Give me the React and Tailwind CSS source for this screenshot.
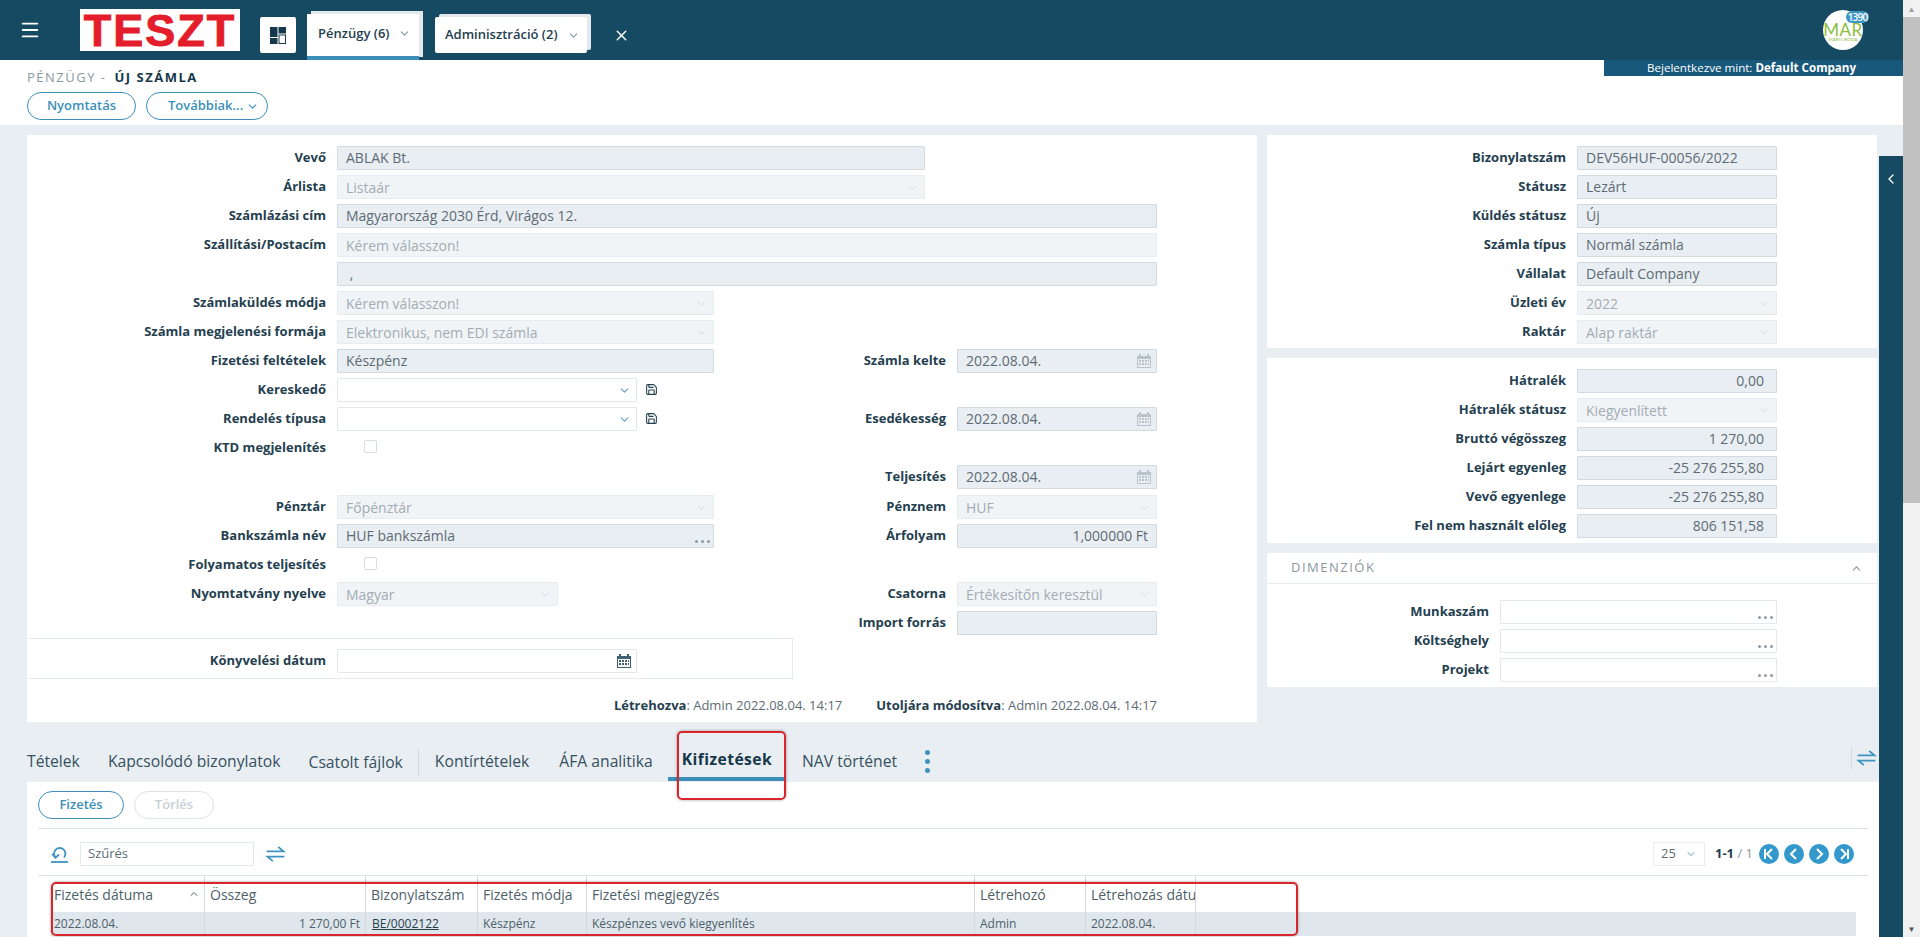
import React from "react";
import { ChevronDown, ChevronUp, ChevronLeft, Menu, X, Save } from "lucide-react";

const inputBase = "h-6 flex items-center px-2 text-[14px] rounded-[1px] whitespace-nowrap";
const readonlyCls = "bg-[#e9eef2] border border-[#d2dae0] text-[#5d6b75]";
const disabledCls = "bg-[#f0f4f7] border border-[#e6ebef] text-[#a3acb3] pt-[1px]";
const emptyCls = "bg-white border border-[#e3e8ec] text-[#5d6b75]";

const Swap = ({ className }) => (
  <svg viewBox="0 0 22 18" className={className} fill="none" stroke="#3f93c1" strokeWidth="2">
    <path d="M1 6h19L14 1" />
    <path d="M21 12H2l6 5" />
  </svg>
);

const Dots = () => (
  <span className="absolute right-[3px] bottom-[4px] flex gap-[3px]">
    <i className="w-[3px] h-[3px] rounded-full bg-[#8b9ba8]" />
    <i className="w-[3px] h-[3px] rounded-full bg-[#8b9ba8]" />
    <i className="w-[3px] h-[3px] rounded-full bg-[#8b9ba8]" />
  </span>
);

const Cal = ({ dark }) => (
  <svg viewBox="0 0 14 14" className="absolute right-[5px] top-[4px] w-[14px] h-[14px]" fill={dark ? "#3f6274" : "#b9c3ca"}>
    <rect x="2" y="0" width="2" height="2" />
    <rect x="10" y="0" width="2" height="2" />
    <path fillRule="evenodd" d="M0 2h14v12H0zM1 5v8h12V5z" />
    <path d="M2 6h2v2H2zM5 6h2v2H5zM8 6h2v2H8zM11 6h1v2h-1zM2 9h2v2H2zM5 9h2v2H5zM8 9h2v2H8zM11 9h1v2h-1z" />
  </svg>
);

const Control = ({ w, value = "", kind = "readonly", right, rightPad = "pr-[8px]", select, dots, date, darkIcon }) => {
  const tone = kind === "readonly" ? readonlyCls : kind === "disabled" ? disabledCls : emptyCls;
  return (
    <div className={`${inputBase} ${tone} relative shrink-0 ${right ? `justify-end ${rightPad}` : ""} ${w}`}>
      {value}
      {select && <ChevronDown size={13} className={`absolute right-[5px] top-[5px] ${darkIcon ? "text-[#5f9fc2]" : "text-[#dde3e8]"}`} />}
      {dots && <Dots />}
      {date && <Cal dark={darkIcon} />}
    </div>
  );
};

const Label = ({ w, children }) => (
  <div className={`${w} shrink-0 text-right pr-[11px] text-[13px] font-bold text-[#24404f] whitespace-nowrap`}>{children}</div>
);

// mezosor: cimke + vezerlo
const Field = ({ label, labelW = "w-[310px]", children }) => (
  <div className="flex items-center h-[29px]">
    <Label w={labelW}>{label}</Label>
    {children}
  </div>
);

const Check = () => <div className="ml-[27px] mb-[2px] w-[13px] h-[13px] border border-[#d7dde2] rounded-[2px] bg-white" />;

const LeftCard = () => (
  <div className="w-[1230px] h-[587px] bg-white pt-[8px] shrink-0">
    <Field label="Vevő"><Control w="w-[588px]" value="ABLAK Bt." /></Field>
    <Field label="Árlista"><Control w="w-[588px]" value="Listaár" kind="disabled" select /></Field>
    <Field label="Számlázási cím"><Control w="w-[820px]" value="Magyarország 2030 Érd, Virágos 12." /></Field>
    <Field label="Szállítási/Postacím"><Control w="w-[820px]" value="Kérem válasszon!" kind="disabled" /></Field>
    <Field label=""><Control w="w-[820px]" value="&nbsp;," /></Field>
    <Field label="Számlaküldés módja"><Control w="w-[377px]" value="Kérem válasszon!" kind="disabled" select /></Field>
    <Field label="Számla megjelenési formája"><Control w="w-[377px]" value="Elektronikus, nem EDI számla" kind="disabled" select /></Field>

    <div className="grid grid-cols-[730px_400px] grid-rows-[repeat(10,29px)]">
      <Field label="Fizetési feltételek"><Control w="w-[377px]" value="Készpénz" /></Field>
      <Field label="Számla kelte" labelW="w-[200px]"><Control w="w-[200px]" value="2022.08.04." date /></Field>

      <Field label="Kereskedő">
        <Control w="w-[300px]" kind="empty" select darkIcon />
        <Save size={13} className="ml-[8px] text-[#24404f]" />
      </Field>
      <div />

      <Field label="Rendelés típusa">
        <Control w="w-[300px]" kind="empty" select darkIcon />
        <Save size={13} className="ml-[8px] text-[#24404f]" />
      </Field>
      <Field label="Esedékesség" labelW="w-[200px]"><Control w="w-[200px]" value="2022.08.04." date /></Field>

      <Field label="KTD megjelenítés"><Check /></Field>
      <div />

      <div />
      <Field label="Teljesítés" labelW="w-[200px]"><Control w="w-[200px]" value="2022.08.04." date /></Field>

      <div className="mt-[1px]"><Field label="Pénztár"><Control w="w-[377px]" value="Főpénztár" kind="disabled" select /></Field></div>
      <div className="mt-[1px]"><Field label="Pénznem" labelW="w-[200px]"><Control w="w-[200px]" value="HUF" kind="disabled" select /></Field></div>

      <div className="mt-[1px]"><Field label="Bankszámla név"><Control w="w-[377px]" value="HUF bankszámla" dots /></Field></div>
      <div className="mt-[1px]"><Field label="Árfolyam" labelW="w-[200px]"><Control w="w-[200px]" value="1,000000 Ft" right /></Field></div>

      <div className="mt-[1px]"><Field label="Folyamatos teljesítés"><Check /></Field></div>
      <div />

      <div className="mt-[1px]"><Field label="Nyomtatvány nyelve"><Control w="w-[221px]" value="Magyar" kind="disabled" select /></Field></div>
      <div className="mt-[1px]"><Field label="Csatorna" labelW="w-[200px]"><Control w="w-[200px]" value="Értékesítőn keresztül" kind="disabled" select /></Field></div>

      <div />
      <div className="mt-[1px]"><Field label="Import forrás" labelW="w-[200px]"><Control w="w-[200px]" /></Field></div>
    </div>

    <div className="w-[766px] h-[41px] mt-[2px] pt-[4px] border-y border-r border-[#e6ebef] flex items-center">
      <Field label="Könyvelési dátum">
        <Control w="w-[300px]" kind="empty" date darkIcon />
      </Field>
    </div>
    <div className="w-[1130px] mt-[17px] text-right text-[13px] text-[#5d6b75]">
      <span className="font-bold text-[#24404f]">Létrehozva</span>: Admin 2022.08.04. 14:17
      <span className="ml-[34px] font-bold text-[#24404f]">Utoljára módosítva</span>: Admin 2022.08.04. 14:17
    </div>
  </div>
);

const RightCards = () => (
  <div className="w-[610px] shrink-0 flex flex-col gap-[10px]">
    <div className="bg-white h-[213px] pt-[8px]">
      <Field label="Bizonylatszám"><Control w="w-[200px]" value="DEV56HUF-00056/2022" /></Field>
      <Field label="Státusz"><Control w="w-[200px]" value="Lezárt" /></Field>
      <Field label="Küldés státusz"><Control w="w-[200px]" value="Új" /></Field>
      <Field label="Számla típus"><Control w="w-[200px]" value="Normál számla" /></Field>
      <Field label="Vállalat"><Control w="w-[200px]" value="Default Company" /></Field>
      <Field label="Üzleti év"><Control w="w-[200px]" value="2022" kind="disabled" select /></Field>
      <Field label="Raktár"><Control w="w-[200px]" value="Alap raktár" kind="disabled" select /></Field>
    </div>
    <div className="bg-white h-[185px] pt-[8px]">
      <Field label="Hátralék"><Control w="w-[200px]" value="0,00" right rightPad="pr-[12px]" /></Field>
      <Field label="Hátralék státusz"><Control w="w-[200px]" value="Kiegyenlített" kind="disabled" select /></Field>
      <Field label="Bruttó végösszeg"><Control w="w-[200px]" value="1 270,00" right rightPad="pr-[12px]" /></Field>
      <Field label="Lejárt egyenleg"><Control w="w-[200px]" value="-25 276 255,80" right rightPad="pr-[12px]" /></Field>
      <Field label="Vevő egyenlege"><Control w="w-[200px]" value="-25 276 255,80" right rightPad="pr-[12px]" /></Field>
      <Field label="Fel nem használt előleg"><Control w="w-[200px]" value="806 151,58" right rightPad="pr-[12px]" /></Field>
    </div>
    <div className="bg-white h-[134px]">
      <div className="h-[31px] border-b border-[#e6ebef] flex items-center justify-between pl-[24px] pr-[14px]">
        <span className="text-[13px] tracking-[1.5px] text-[#8a979f]">DIMENZIÓK</span>
        <ChevronUp size={13} className="text-[#8a979f]" />
      </div>
      <div className="pt-[13px]">
        <Field label="Munkaszám" labelW="w-[233px]"><Control w="w-[277px]" kind="empty" dots /></Field>
        <Field label="Költséghely" labelW="w-[233px]"><Control w="w-[277px]" kind="empty" dots /></Field>
        <Field label="Projekt" labelW="w-[233px]"><Control w="w-[277px]" kind="empty" dots /></Field>
      </div>
    </div>
  </div>
);

const TabBar = () => (
  <div className="h-[45px] mt-[15px] flex items-start text-[15.7px] text-[#35505f] pr-[2px] whitespace-nowrap">
    <div className="flex items-center h-[45px] pt-[5px] gap-[28px]">
      <span>Tételek</span>
      <span>Kapcsolódó bizonylatok</span>
      <span className="border-r border-[#d2dae0] pr-[15px] -mr-[12px] leading-[27px]">Csatolt fájlok</span>
      <span>Kontírtételek</span>
      <span className="ml-[2px]">ÁFA analitika</span>
    </div>
    <div className="h-[44px] ml-[15px] px-[14px] flex items-center pt-[6px] border-b-4 border-[#3c8fb9] font-bold text-[#17384a] tracking-[0.4px]">Kifizetések</div>
    <div className="flex items-center h-[45px] pt-[5px] ml-[16px]">NAV történet</div>
    <div className="flex flex-col gap-[4px] ml-[28px] mt-[13px]">
      <i className="w-[5px] h-[5px] rounded-full bg-[#3f93c1]" />
      <i className="w-[5px] h-[5px] rounded-full bg-[#3f93c1]" />
      <i className="w-[5px] h-[5px] rounded-full bg-[#3f93c1]" />
    </div>
    <div className="ml-auto mt-[10px] h-[22px] border-l border-[#d2dae0] pl-[4px] flex items-center">
      <Swap className="w-[21px] h-[16px]" />
    </div>
  </div>
);

const cols = [
  ["w-[154px]", "Fizetés dátuma"],
  ["w-[161px]", "Összeg"],
  ["w-[112px]", "Bizonylatszám"],
  ["w-[109px]", "Fizetés módja"],
  ["w-[388px]", "Fizetési megjegyzés"],
  ["w-[111px]", "Létrehozó"],
  ["w-[110px]", "Létrehozás dátum"],
];

const Circle = ({ d, bar }) => (
  <span className="w-[20px] h-[20px] rounded-full bg-[#3398cb] flex items-center justify-center">
    <svg viewBox="0 0 12 14" className="w-[12px] h-[14px]" fill="none" stroke="white" strokeWidth="2">
      <path d={d} />
      {bar && <path d={bar} />}
    </svg>
  </span>
);

const Reset = () => (
  <svg viewBox="0 0 17 17" className="w-[17px] h-[17px]" fill="none" stroke="#3f93c1" strokeWidth="1.8">
    <path d="M4.5 11.5A5.7 5.7 0 1 1 13 11.5" />
    <path d="M1 8l3.5 3.8L8 8.5" />
    <path d="M0 16h17" />
  </svg>
);

const Payments = () => (
  <div className="bg-white h-[155px] overflow-hidden px-[11px] pt-[9px]">
    <div className="flex gap-[10px] h-[38px] border-b border-[#dde3e8]">
      <button className="h-[28px] w-[86px] rounded-full border border-[#3c8fb9] text-[13px] font-semibold text-[#3c8fb9]">Fizetés</button>
      <button className="h-[28px] w-[80px] rounded-full border border-[#dde3e8] text-[13px] font-semibold text-[#c8d0d6]">Törlés</button>
    </div>
    <div className="h-[47px] pt-[4px] border-b border-[#dde3e8] flex items-center justify-between pl-[13px] pr-[14px]">
      <div className="flex items-center">
        <Reset />
        <div className="ml-[12px] w-[174px] h-[24px] border border-[#e3e8ec] flex items-center px-[7px] text-[13px] text-[#5d6b75]">Szűrés</div>
        <Swap className="ml-[11px] w-[21px] h-[16px]" />
      </div>
      <div className="flex items-center">
        <div className="w-[52px] h-[24px] border border-[#e9edf0] flex items-center justify-between px-[7px] text-[13px] text-[#5d6b75]">
          25<ChevronDown size={12} className="text-[#5f9fc2]" />
        </div>
        <span className="ml-[10px] mr-[6px] text-[13px] text-[#8a979f]"><b className="text-[#24404f]">1-1</b> / 1</span>
        <div className="flex gap-[5px]">
          <Circle d="M9 2L4 7l5 5" bar="M2 2v10" />
          <Circle d="M8 2L3 7l5 5" />
          <Circle d="M4 2l5 5-5 5" />
          <Circle d="M3 2l5 5-5 5" bar="M10 2v10" />
        </div>
      </div>
    </div>
    <div className="ml-[13px] mr-[12px] text-[14px] text-[#4e5f6a]">
      <div className="flex h-[36px]">
        {cols.map(([w, t], i) => (
          <div key={t} className={`${w} shrink-0 overflow-hidden whitespace-nowrap border-r border-[#d2dae0] ${i === 0 ? "pl-[3px]" : "pl-[5px]"} flex items-center justify-between pr-[4px]`}>
            {t}{i === 0 && <ChevronUp size={12} />}
          </div>
        ))}
      </div>
      <div className="flex h-[24px] bg-[#dfe6ec] text-[12px] items-center">
        <div className="w-[154px] h-full flex items-center pl-[3px] border-r border-[#d2dae0]">2022.08.04.</div>
        <div className="w-[161px] h-full flex items-center justify-end pr-[5px] border-r border-[#d2dae0]">1 270,00 Ft</div>
        <div className="w-[112px] h-full flex items-center pl-[6px] border-r border-[#d2dae0] underline text-[#24404f]">BE/0002122</div>
        <div className="w-[109px] h-full flex items-center pl-[5px] border-r border-[#d2dae0]">Készpénz</div>
        <div className="w-[388px] h-full flex items-center pl-[5px] border-r border-[#d2dae0]">Készpénzes vevő kiegyenlítés</div>
        <div className="w-[111px] h-full flex items-center pl-[5px] border-r border-[#d2dae0]">Admin</div>
        <div className="w-[110px] h-full flex items-center pl-[5px] border-r border-[#d2dae0]">2022.08.04.</div>
      </div>
    </div>
  </div>
);

const Header = () => (
  <header className="h-[60px] bg-[#164a63] flex items-start relative shrink-0">
    <Menu size={22} className="ml-[19px] mt-[19px] text-white" />
    <div className="ml-[39px] mt-[9px] w-[160px] h-[42px] bg-white flex items-center justify-center text-[#e31d2b] text-[45px] font-bold tracking-[2px] leading-none [-webkit-text-stroke:1px_#e31d2b] font-['Liberation_Sans',sans-serif]">TESZT</div>
    <div className="ml-[20px] mt-[17px] w-[36px] h-[36px] bg-white rounded-[2px] flex items-center justify-center">
      <svg viewBox="0 0 16 17" className="w-[16px] h-[17px]">
        <rect x="0" y="0" width="7.5" height="10" fill="#16384c" />
        <rect x="0" y="11" width="7.5" height="6" fill="#16384c" />
        <rect x="8.5" y="0" width="7.5" height="6.5" fill="#16384c" />
        <rect x="9" y="8" width="6.5" height="8.5" fill="none" stroke="#16384c" strokeWidth="1" />
      </svg>
    </div>
    <div className="ml-[11px] mt-[14px] relative">
      <div className="w-[112px] h-[46px] pl-[11px] bg-white border-b-4 border-[#3c8fb9] flex items-center text-[13px] font-semibold text-[#24404f] gap-[9px] pb-[3px] shadow-[4px_-3px_0_0_#e3e8ec]">
        Pénzügy (6) <ChevronDown size={13} className="text-[#8a979f]" />
      </div>
    </div>
    <div className="ml-[16px] mt-[17px] w-[152px] h-[36px] pl-[10px] bg-white rounded-[2px] flex items-center text-[13px] font-semibold text-[#24404f] gap-[9px] shadow-[4px_-3px_0_0_#e3e8ec]">
      Adminisztráció (2) <ChevronDown size={13} className="text-[#8a979f]" />
    </div>
    <X size={17} className="ml-[26px] mt-[27px] text-white" />
    <div className="absolute left-[1823px] top-[10px] w-[40px] h-[40px] rounded-full bg-white flex flex-col items-center justify-center font-['Lato',sans-serif]">
      <span className="text-[17px] leading-[14px] text-[#8ebd3c] mt-[6px] tracking-[0.5px]">MAR</span>
      <span className="text-[4.5px] leading-[6px] text-[#8ebd3c] whitespace-nowrap">MARTI IRODA</span>
    </div>
    <span className="absolute left-[1846px] top-[11px] w-[23px] h-[12px] rounded-full bg-[#3c96c4] text-white text-[10px] font-semibold leading-[12px] text-center tracking-[-0.8px]">1390</span>
  </header>
);

export default function App() {
  return (
    <div className="relative w-[1920px] h-[937px] overflow-hidden flex font-['Open_Sans',sans-serif] bg-white">
      <div className="w-[1903px] flex flex-col shrink-0">
        <Header />
        <div className="h-[65px] flex justify-between shrink-0 bg-white">
          <div className="pl-[27px]">
            <div className="h-[32px] pt-[4px] flex items-center text-[13px] tracking-[1.5px] text-[#8a979f]">
              PÉNZÜGY -<b className="ml-[8px] text-[#17384a] tracking-[1.5px]">ÚJ SZÁMLA</b>
            </div>
            <div className="flex gap-[10px]">
              <button className="w-[109px] h-[28px] rounded-full border border-[#3c8fb9] text-[13px] font-semibold text-[#3c8fb9]">Nyomtatás</button>
              <button className="w-[122px] h-[28px] pl-[21px] rounded-full border border-[#3c8fb9] text-[13px] font-semibold text-[#3c8fb9] flex items-center gap-[3px]">
                Továbbiak... <ChevronDown size={13} />
              </button>
            </div>
          </div>
          <div className="w-[299px] h-[16px] bg-[#18587b] text-white text-[11.6px] leading-[16px] pl-[43px] whitespace-nowrap">
            Bejelentkezve mint: <b>Default Company</b>
          </div>
        </div>
        <div className="flex-1 bg-[#e9eef2] flex">
          <div className="pl-[27px] pt-[10px] w-[1879px] shrink-0">
            <div className="flex gap-[10px]">
              <LeftCard />
              <RightCards />
            </div>
            <TabBar />
            <Payments />
          </div>
          <div className="pt-[31px] w-[24px] shrink-0 flex flex-col">
            <div className="flex-1 bg-[#164a63] pt-[15px] text-white flex justify-center items-start">
              <ChevronLeft size={16} />
            </div>
          </div>
        </div>
      </div>

      <div className="w-[17px] bg-[#f1f1f1] relative shrink-0">
        <div className="h-[17px] flex items-center justify-center text-[8px] text-[#a0a0a0]">▲</div>
        <div className="h-[486px] bg-[#c1c1c1]" />
        <div className="absolute bottom-[2px] left-0 right-0 h-[13px] flex items-center justify-center text-[8px] text-[#505050]">▼</div>
      </div>

      {/* piros jelolesek */}
      <div className="absolute left-[677px] top-[731px] w-[109px] h-[69px] border-2 border-[#d8262c] rounded-[5px] shadow-[0_0_3px_rgba(0,0,0,0.4)]" />
      <div className="absolute left-[51px] top-[882px] w-[1247px] h-[54px] border-2 border-[#d8262c] rounded-[5px] shadow-[0_0_3px_rgba(0,0,0,0.4)]" />
    </div>
  );
}
